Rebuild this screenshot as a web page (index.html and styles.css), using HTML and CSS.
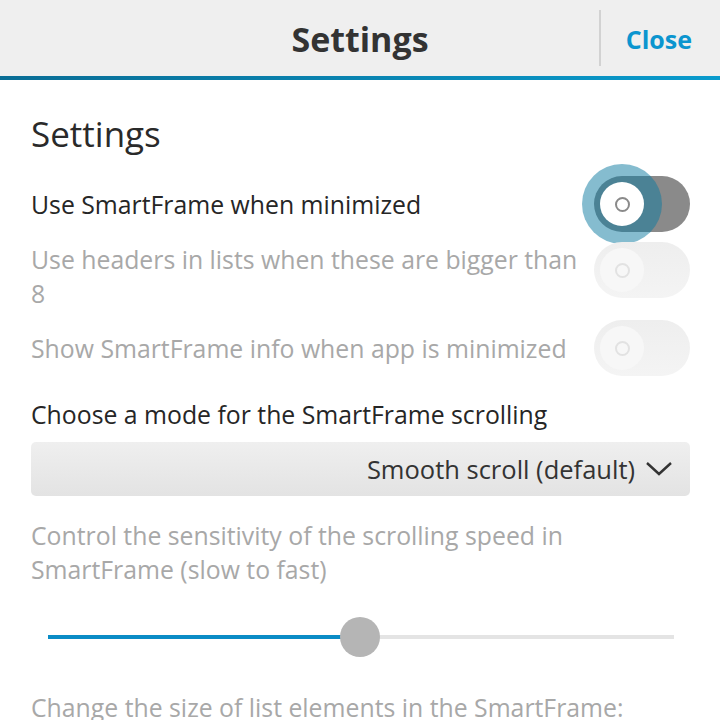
FILE: index.html
```html
<!DOCTYPE html>
<html>
<head>
<meta charset="utf-8">
<title>Settings</title>
<link rel="stylesheet" href="styles.css">
</head>
<body>
<header class="titlebar">
  <div class="tb-side"></div>
  <div class="tb-title">Settings</div>
  <div class="tb-side tb-right">
    <span class="tb-divider"></span>
    <span class="tb-close">Close</span>
  </div>
</header>
<main class="content">
  <h1 class="heading">Settings</h1>

  <div class="row">
    <div class="label">Use SmartFrame when minimized</div>
    <div class="toggle toggle-active">
      <span class="halo"></span>
      <span class="knob"><span class="ring"></span></span>
    </div>
  </div>

  <div class="row row-top">
    <div class="label muted">Use headers in lists when these are bigger than 8</div>
    <div class="toggle toggle-disabled">
      <span class="knob"><span class="ring"></span></span>
    </div>
  </div>

  <div class="row">
    <div class="label muted">Show SmartFrame info when app is minimized</div>
    <div class="toggle toggle-disabled">
      <span class="knob"><span class="ring"></span></span>
    </div>
  </div>

  <div class="text choose">Choose a mode for the SmartFrame scrolling</div>

  <div class="dropdown">
    <span class="dd-text">Smooth scroll (default)</span>
    <svg class="dd-chev" width="28" height="16" viewBox="0 0 28 16"><polyline points="2,2 14,13 26,2" fill="none" stroke="#333" stroke-width="2.4" stroke-linejoin="miter"/></svg>
  </div>

  <div class="text muted control">Control the sensitivity of the scrolling speed in SmartFrame (slow to fast)</div>

  <div class="slider">
    <div class="track">
      <div class="fill" style="width: 49.8%"></div>
      <div class="thumb" style="left: 49.8%"></div>
    </div>
  </div>

  <div class="text muted change">Change the size of list elements in the SmartFrame:</div>
</main>
</body>
</html>
```

FILE: styles.css
```css
html, body {
  margin: 0;
  padding: 0;
}
body {
  width: 720px;
  height: 720px;
  overflow: hidden;
  background: #ffffff;
  font-family: "Open Sans", "Noto Sans", sans-serif;
  color: #262626;
}

.titlebar {
  height: 76px;
  background: #efefef;
  display: grid;
  grid-template-columns: 1fr auto 1fr;
  align-items: center;
  border-bottom: 4px solid #0a84b5;
  border-image: linear-gradient(to right, #0a6d95, #0a9bcd) 1;
}
.tb-title {
  font-size: 34px;
  font-weight: 700;
  color: #333333;
  line-height: 46px;
  padding-top: 2px;
}
.tb-right {
  display: flex;
  align-items: center;
  justify-content: flex-end;
  height: 76px;
}
.tb-divider {
  width: 2px;
  height: 56px;
  background: #d2d2d2;
}
.tb-close {
  font-size: 25px;
  font-weight: 700;
  color: #0b95cf;
  margin-left: 25px;
  padding-right: 28px;
  line-height: 34px;
  padding-top: 2px;
}

.content {
  padding: 31px 30px 0 31px;
}
.heading {
  margin: 0 0 19px 0;
  font-size: 35px;
  font-weight: 400;
  line-height: 46px;
  color: #2a2a2a;
}

.row {
  display: flex;
  align-items: center;
  gap: 14px;
  margin-bottom: 10px;
}
.row-top {
  align-items: flex-start;
}
.label {
  flex: 1;
  font-size: 24.8px;
  line-height: 34px;
}
.muted {
  color: #a8a8a8;
}

.toggle {
  position: relative;
  flex: none;
  width: 96px;
  height: 56px;
  border-radius: 28px;
}
.toggle-active {
  background: #8a8a8a;
}
.toggle-disabled {
  background: linear-gradient(#eeeeee, #f4f4f4);
}
.halo {
  position: absolute;
  left: -12px;
  top: -12px;
  width: 80px;
  height: 80px;
  border-radius: 50%;
  background: rgba(11, 122, 160, 0.5);
}
.knob {
  position: absolute;
  left: 6px;
  top: 6px;
  width: 44px;
  height: 44px;
  border-radius: 50%;
  display: flex;
  align-items: center;
  justify-content: center;
}
.toggle-active .knob {
  background: #ffffff;
}
.toggle-disabled .knob {
  background: #f7f7f7;
}
.ring {
  width: 11px;
  height: 11px;
  border-radius: 50%;
  border: 2px solid #8a8a8a;
}
.toggle-disabled .ring {
  border-color: #e2e2e2;
}

.text {
  font-size: 24.8px;
  line-height: 34px;
}
.choose {
  margin-top: 21px;
}
.dropdown {
  margin-top: 11px;
  height: 54px;
  border-radius: 5px;
  background: linear-gradient(#efefef, #e3e3e3);
  display: flex;
  align-items: center;
  justify-content: flex-end;
  gap: 10px;
  padding-right: 17px;
}
.dd-text {
  font-size: 25.5px;
  line-height: 34px;
  color: #333333;
}
.dd-chev {
  display: block;
}
.control {
  margin-top: 22px;
}
.slider {
  margin-top: 31px;
  height: 40px;
  padding: 0 16px 0 17px;
  display: flex;
  align-items: center;
}
.track {
  position: relative;
  flex: 1;
  height: 4px;
  background: #e4e4e4;
}
.fill {
  height: 4px;
  background: #0a8cc6;
}
.thumb {
  position: absolute;
  top: -18px;
  width: 40px;
  height: 40px;
  margin-left: -20px;
  border-radius: 50%;
  background: #b5b5b5;
}
.change {
  margin-top: 33px;
}
```
